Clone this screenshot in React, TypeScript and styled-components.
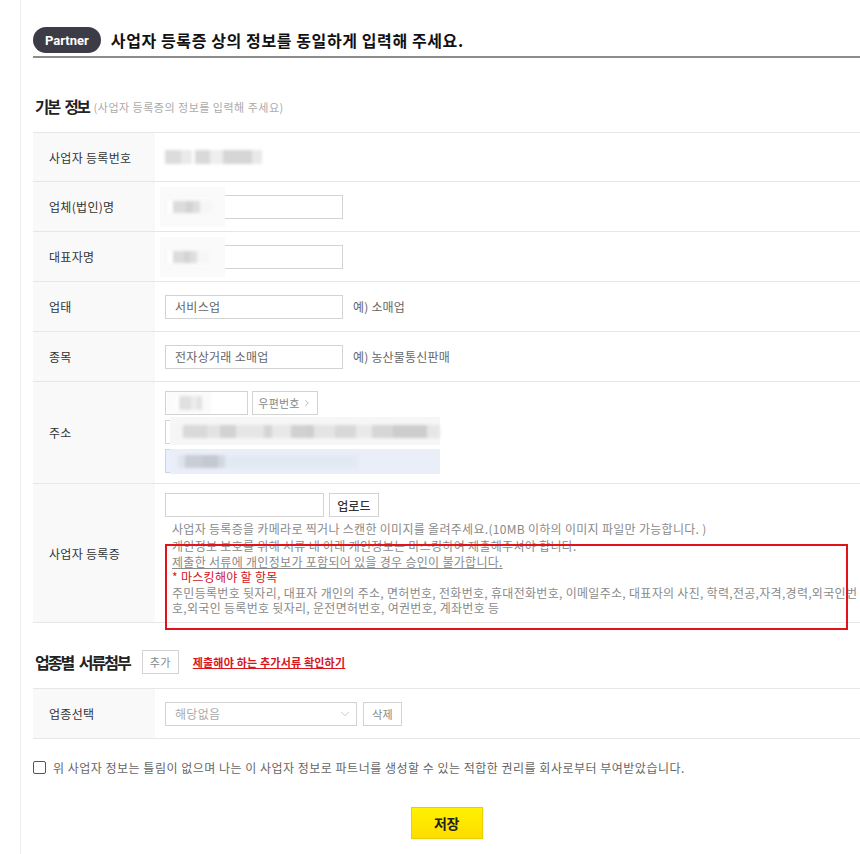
import React from 'react'
import styled, { createGlobalStyle } from 'styled-components'
import { ChevronDown, ChevronRight } from 'lucide-react'

const GlobalStyle = createGlobalStyle`
  body {
    margin: 0;
    background: #fff;
    font-family: "Noto Sans CJK KR", "Noto Sans", sans-serif;
    color: #333;
  }
  * { box-sizing: border-box; }
`

const Page = styled.div`
  min-height: 854px;
  padding-left: 20px;
  overflow: hidden;
`

const Frame = styled.div`
  min-height: 854px;
  border-left: 1px solid #ededed;
  padding: 27px 0 40px 12px;
`

const Header = styled.div`
  display: flex;
  align-items: center;
  gap: 10px;
  padding-bottom: 3px;
  border-bottom: 2px solid #8c8c8c;
`

const Pill = styled.span`
  height: 26px;
  padding: 0 12px;
  border-radius: 13px;
  background: #3c3c46;
  color: #fff;
  font-family: Roboto, "Liberation Sans", sans-serif;
  font-weight: 700;
  font-size: 13px;
  display: flex;
  align-items: center;
`

const HeaderTitle = styled.h1`
  margin: 0;
  font-size: 16px;
  font-weight: 700;
  color: #111;
  letter-spacing: 0.6px;
`

const SectionHead = styled.div<{ $top: number }>`
  display: flex;
  align-items: center;
  gap: 5px;
  height: 22px;
  margin-top: ${(p) => p.$top}px;
  padding-left: 2px;
`

const SectionTitle = styled.h2<{ $size: number; $spacing: number }>`
  margin: 0;
  font-size: ${(p) => p.$size}px;
  font-weight: 700;
  color: #222;
  letter-spacing: ${(p) => p.$spacing}px;
  word-spacing: 4px;
`

const SectionNote = styled.span`
  font-size: 11px;
  color: #aaa;
  letter-spacing: 0.5px;
  margin-top: 2px;
`

const Table = styled.div`
  margin-top: 15px;
  border-top: 1px solid #e6e6e6;
`

const Row = styled.div<{ $h: number }>`
  display: grid;
  grid-template-columns: 122px 1fr;
  min-height: ${(p) => p.$h}px;
  border-bottom: 1px solid #e6e6e6;
`

const Label = styled.div`
  background: #f9f9f9;
  padding-left: 16px;
  display: flex;
  align-items: center;
  font-size: 12px;
  color: #333;
  letter-spacing: 0.3px;
`

const Cell = styled.div`
  position: relative;
  display: flex;
  align-items: center;
  gap: 10px;
  padding: 0 10px;
`

const StackCell = styled.div<{ $pt: number; $pb: number }>`
  position: relative;
  display: flex;
  flex-direction: column;
  align-items: flex-start;
  gap: 5px;
  padding: ${(p) => p.$pt}px 0 ${(p) => p.$pb}px 10px;
`

const InputLine = styled.div`
  display: flex;
  gap: 4px;
`

const FieldWrap = styled.div`
  position: relative;
`

const TextInput = styled.input<{ $w: number; $filled?: boolean }>`
  display: block;
  width: ${(p) => p.$w}px;
  height: 24px;
  border: 1px solid #d3d3d3;
  background: ${(p) => (p.$filled ? '#e8f0fe' : '#fff')};
  padding: 0 9px;
  font-family: inherit;
  font-size: 12px;
  color: #666;
  letter-spacing: 0.3px;
  outline: none;
`

const Hint = styled.span`
  font-size: 12px;
  color: #666;
  letter-spacing: 0.2px;
`

const SmallButton = styled.button<{ $w: number; $dark?: boolean }>`
  width: ${(p) => p.$w}px;
  height: 24px;
  border: 1px solid #d3d3d3;
  background: #fff;
  padding: 0;
  font-family: inherit;
  font-size: ${(p) => (p.$dark ? 12 : 11)}px;
  font-weight: ${(p) => (p.$dark ? 500 : 400)};
  color: ${(p) => (p.$dark ? '#333' : '#888')};
  letter-spacing: 0.2px;
  display: flex;
  align-items: center;
  justify-content: center;
  gap: 2px;
  cursor: pointer;
`

const masks: Record<string, string> = {
  number:
    'linear-gradient(90deg, #dcdcdc 0 16%, #eaeaea 16% 28%, #fff 28% 31%, #d9d9d9 31% 46%, #eeeeee 46% 60%, #d6d6d6 60% 90%, #e9e9e9 90% 100%)',
  name:
    'linear-gradient(90deg, #fff 0 12%, #dcdcdc 12% 40%, #d3d3d3 40% 55%, #dedede 55% 72%, #f6f6f6 72% 100%)',
  zip:
    'linear-gradient(90deg, #fff 0 10%, #e0e0e0 10% 45%, #ececec 45% 60%, #e2e2e2 60% 75%, #fafafa 75% 100%)',
  address:
    'linear-gradient(90deg, #f4f4f4 0 2%, #d9d9d9 2% 11%, #e3e3e3 11% 16%, #d2d2d2 16% 22%, #e6e6e6 22% 33%, #d5d5d5 33% 36%, #e8e8e8 36% 43%, #d1d1d1 43% 49%, #cfcfcf 49% 52%, #e4e4e4 52% 60%, #d8d8d8 60% 68%, #e9e9e9 68% 74%, #d6d6d6 74% 82%, #cdcdcd 82% 95%, #e6e6e6 95% 100%)',
  detail:
    'linear-gradient(90deg, #dfe4ec 0 4%, #c9cdd5 4% 14%, #c4c8d0 14% 22%, #d3d8e0 22% 26%, #e3e9f3 26% 100%)',
}

const Mask = styled.span<{ $kind: string; $w: number; $h: number }>`
  display: block;
  width: ${(p) => p.$w}px;
  height: ${(p) => p.$h}px;
  background: ${(p) => masks[p.$kind]};
  filter: blur(1.8px);
`

const MaskOver = styled.div<{ $l: number; $t: number; $w: number; $h: number; $bg: string }>`
  position: absolute;
  left: ${(p) => p.$l}px;
  top: ${(p) => p.$t}px;
  width: ${(p) => p.$w}px;
  height: ${(p) => p.$h}px;
  background: ${(p) => p.$bg};
  display: flex;
  align-items: center;
  padding-left: 8px;
`

const Notes = styled.div`
  margin-top: -1px;
  padding-left: 7px;
  font-size: 12px;
  line-height: 15.4px;
  color: #8a8a8a;
  letter-spacing: 0.3px;
  white-space: nowrap;
`

const NoteLine = styled.div<{ $gap?: number; $tone?: 'red' | 'under' }>`
  margin-top: ${(p) => p.$gap || 0}px;
  color: ${(p) => (p.$tone === 'red' ? '#d4121a' : '#8a8a8a')};
  text-decoration: ${(p) => (p.$tone === 'under' ? 'underline' : 'none')};
`

const RedBox = styled.div`
  position: absolute;
  left: 10px;
  top: 60px;
  width: 683px;
  height: 86px;
  border: 2px solid #e3121a;
  pointer-events: none;
`

const LinkText = styled.a`
  font-size: 11px;
  font-weight: 700;
  color: #d8141c;
  text-decoration: underline;
  letter-spacing: 0.2px;
  cursor: pointer;
`

const Select = styled.div`
  width: 192px;
  height: 24px;
  border: 1px solid #d3d3d3;
  display: flex;
  align-items: center;
  justify-content: space-between;
  padding: 0 4px 0 9px;
  font-size: 12px;
  color: #aaa;
  letter-spacing: 0.3px;
`

const SelectGroup = styled.div`
  display: flex;
  gap: 6px;
`

const Agree = styled.label`
  display: flex;
  align-items: center;
  gap: 7px;
  margin-top: 20px;
  font-size: 12px;
  color: #666;
  letter-spacing: 0.5px;
`

const Check = styled.span`
  width: 13px;
  height: 13px;
  border: 1px solid #555;
  border-radius: 2px;
  background: #fff;
`

const Actions = styled.div`
  display: flex;
  justify-content: center;
  margin-top: 31px;
`

const SaveButton = styled.button`
  width: 72px;
  height: 32px;
  border: 1px solid #e8cf00;
  background: linear-gradient(#fff200, #ffdc00);
  font-family: inherit;
  font-size: 14px;
  font-weight: 700;
  color: #222;
  letter-spacing: -0.5px;
  cursor: pointer;
`

export default function App() {
  return (
    <Page>
      <GlobalStyle />
      <Frame>
        <Header>
          <Pill>Partner</Pill>
          <HeaderTitle>사업자 등록증 상의 정보를 동일하게 입력해 주세요.</HeaderTitle>
        </Header>

        <SectionHead $top={37}>
          <SectionTitle $size={15.5} $spacing={-2.2}>기본 정보</SectionTitle>
          <SectionNote>(사업자 등록증의 정보를 입력해 주세요)</SectionNote>
        </SectionHead>

        <Table>
          <Row $h={49}>
            <Label>사업자 등록번호</Label>
            <Cell>
              <Mask $kind="number" $w={97} $h={14} />
            </Cell>
          </Row>
          <Row $h={50}>
            <Label>업체(법인)명</Label>
            <Cell>
              <FieldWrap>
                <TextInput $w={178} defaultValue="" />
                <MaskOver $l={-5} $t={-8} $w={65} $h={40} $bg="rgba(250,250,250,0.95)">
                  <Mask $kind="name" $w={45} $h={12} />
                </MaskOver>
              </FieldWrap>
            </Cell>
          </Row>
          <Row $h={50}>
            <Label>대표자명</Label>
            <Cell>
              <FieldWrap>
                <TextInput $w={178} defaultValue="" />
                <MaskOver $l={-5} $t={-8} $w={65} $h={40} $bg="rgba(250,250,250,0.95)">
                  <Mask $kind="name" $w={40} $h={12} />
                </MaskOver>
              </FieldWrap>
            </Cell>
          </Row>
          <Row $h={50}>
            <Label>업태</Label>
            <Cell>
              <TextInput $w={178} defaultValue="서비스업" />
              <Hint>예) 소매업</Hint>
            </Cell>
          </Row>
          <Row $h={50}>
            <Label>종목</Label>
            <Cell>
              <TextInput $w={178} defaultValue="전자상거래 소매업" />
              <Hint>예) 농산물통신판매</Hint>
            </Cell>
          </Row>
          <Row $h={102}>
            <Label>주소</Label>
            <StackCell $pt={9} $pb={10}>
              <InputLine>
                <FieldWrap>
                  <TextInput $w={83} defaultValue="" />
                  <MaskOver $l={2} $t={1} $w={44} $h={22} $bg="#fbfbfb">
                    <Mask $kind="zip" $w={36} $h={14} />
                  </MaskOver>
                </FieldWrap>
                <SmallButton $w={66}>
                  우편번호 <ChevronRight size={10} color="#aaa" strokeWidth={2} />
                </SmallButton>
              </InputLine>
              <FieldWrap>
                <TextInput $w={275} defaultValue="" />
                <MaskOver $l={5} $t={-3} $w={270} $h={28} $bg="#f6f6f6">
                  <Mask $kind="address" $w={262} $h={13} />
                </MaskOver>
              </FieldWrap>
              <FieldWrap>
                <TextInput $w={275} $filled defaultValue="" />
                <MaskOver $l={5} $t={0} $w={270} $h={25} $bg="#e9eef8">
                  <Mask $kind="detail" $w={180} $h={13} />
                </MaskOver>
              </FieldWrap>
            </StackCell>
          </Row>
          <Row $h={139}>
            <Label>사업자 등록증</Label>
            <StackCell $pt={9} $pb={5}>
              <InputLine>
                <TextInput $w={159} defaultValue="" />
                <SmallButton $w={50} $dark style={{ marginLeft: 1 }}>
                  업로드
                </SmallButton>
              </InputLine>
              <Notes>
                <NoteLine>
                  사업자 등록증을 카메라로 찍거나 스캔한 이미지를 올려주세요.(10MB 이하의 이미지 파일만 가능합니다. )
                </NoteLine>
                <NoteLine $gap={2}>개인정보 보호를 위해 서류 내 아래 개인정보는 마스킹하여 제출해주셔야 합니다.</NoteLine>
                <NoteLine $tone="under">제출한 서류에 개인정보가 포함되어 있을 경우 승인이 불가합니다.</NoteLine>
                <NoteLine $tone="red">* 마스킹해야 할 항목</NoteLine>
                <NoteLine>
                  주민등록번호 뒷자리, 대표자 개인의 주소, 면허번호, 전화번호, 휴대전화번호, 이메일주소, 대표자의 사진, 학력,전공,자격,경력,외국인번
                </NoteLine>
                <NoteLine>호,외국인 등록번호 뒷자리, 운전면허번호, 여권번호, 계좌번호 등</NoteLine>
              </Notes>
              <RedBox />
            </StackCell>
          </Row>
        </Table>

        <SectionHead $top={28}>
          <SectionTitle $size={16} $spacing={-2}>업종별 서류첨부</SectionTitle>
          <SmallButton $w={37} style={{ marginLeft: 7 }}>
            추가
          </SmallButton>
          <LinkText style={{ marginLeft: 9 }}>제출해야 하는 추가서류 확인하기</LinkText>
        </SectionHead>

        <Table>
          <Row $h={50}>
            <Label>업종선택</Label>
            <Cell>
              <SelectGroup>
                <Select>
                  해당없음
                  <ChevronDown size={14} color="#c4c4c4" strokeWidth={1.5} />
                </Select>
                <SmallButton $w={39}>삭제</SmallButton>
              </SelectGroup>
            </Cell>
          </Row>
        </Table>

        <Agree>
          <Check />
          위 사업자 정보는 틀림이 없으며 나는 이 사업자 정보로 파트너를 생성할 수 있는 적합한 권리를 회사로부터 부여받았습니다.
        </Agree>

        <Actions>
          <SaveButton>저장</SaveButton>
        </Actions>
      </Frame>
    </Page>
  )
}
